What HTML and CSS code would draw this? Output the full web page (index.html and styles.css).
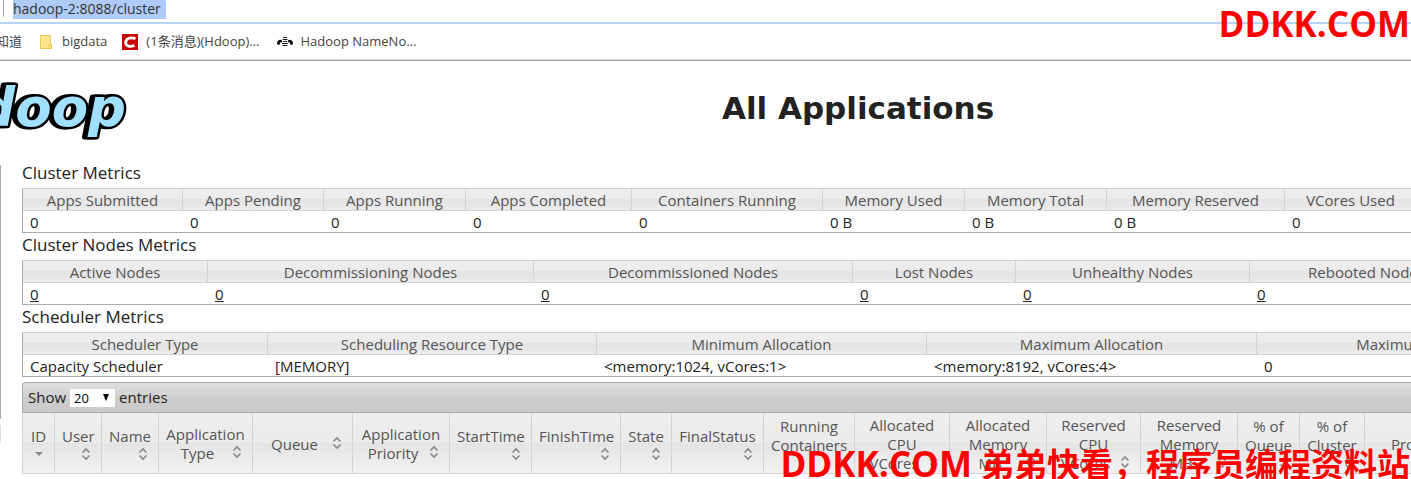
FILE: index.html
```html
<!DOCTYPE html>
<html lang="zh-CN">
<head>
<meta charset="utf-8">
<title>All Applications</title>
<link rel="stylesheet" href="styles.css">
</head>
<body>
<svg class="defs" aria-hidden="true">
  <symbol id="both" viewBox="0 0 16 16"><path d="M4.500 6.500 8 3l3.500 3.500M4.500 9.500 8 13l3.500-3.500" fill="none" stroke="#888" stroke-width="1.600"/></symbol>
  <symbol id="down" viewBox="0 0 16 16"><path d="M4 6h8L8 10z" fill="#888"/></symbol>
</svg>

<div class="address-bar">
  <span class="divider"></span>
  <input class="address" aria-label="Address" value="hadoop-2:8088/cluster">
</div>
<nav class="bookmarks">
  <a href="#" class="bm bm-zhidao">知道</a>
  <a href="#" class="bm bm-bigdata"><svg width="16" height="16" viewBox="0 0 16 16"><path d="M2.500 1.500h10v9h1v4h-11z" fill="#ffe48f" stroke="#e8c850"/><path d="M10.500 14.500v-3h3" fill="none" stroke="#e8c850"/></svg>bigdata</a>
  <a href="#" class="bm bm-csdn"><svg width="16" height="16" viewBox="0 0 16 16"><path d="M0 0h16v16H0z" fill="#c90000"/><path d="M13.500 4.600C10 3.300 4.500 3.400 3.700 8c-.5 4.700 4.500 5 8.800 3.500" fill="none" stroke="#fff" stroke-width="2.800"/></svg>(1条消息)(Hdoop)...</a>
  <a href="#" class="bm"><svg width="16" height="16" viewBox="0 0 16 16"><path d="M0 8.500C1 5.500 3 5 5.200 6.500L5 8.300l-1.800.2L2.500 11 .3 10.500zM16 8.500C15 5.500 13 5 10.800 6.500l.2 1.800 1.800.2.700 2.500 2.200-.5z" fill="#111"/><path d="M6 3.500h4M5.500 5.500h5M6 7.500h4M5 9.500h6M5.500 11.500h5" stroke="#222" stroke-width="1.200"/></svg>Hadoop NameNo...</a>
</nav>

<header class="header">
  <svg class="logo" width="135" height="70" role="img" aria-label="hadoop">
    <text class="logo-shadow" x="123" y="55" text-anchor="end">hadoop</text>
    <text class="logo-face" x="126" y="55" text-anchor="end">hadoop</text>
  </svg>
  <h1>All Applications</h1>
</header>

<div class="page">
  <aside class="side"><div class="side-main"></div><div class="side-next"></div></aside>
  <main class="content">
    <h2>Cluster Metrics</h2>
    <table class="metrics">
      <colgroup><col class="w160"><col class="w141"><col class="w142"><col class="w166"><col class="w191"><col class="w142"><col class="w142"><col class="w178"><col class="w132"></colgroup>
      <thead><tr><th>Apps Submitted</th><th>Apps Pending</th><th>Apps Running</th><th>Apps Completed</th><th>Containers Running</th><th>Memory Used</th><th>Memory Total</th><th>Memory Reserved</th><th>VCores Used</th></tr></thead>
      <tbody><tr><td>0</td><td>0</td><td>0</td><td>0</td><td>0</td><td>0 B</td><td>0 B</td><td>0 B</td><td>0</td></tr></tbody>
    </table>
    <h2>Cluster Nodes Metrics</h2>
    <table class="metrics">
      <colgroup><col class="w185"><col class="w326"><col class="w319"><col class="w163"><col class="w234"><col class="w234"></colgroup>
      <thead><tr><th>Active Nodes</th><th>Decommissioning Nodes</th><th>Decommissioned Nodes</th><th>Lost Nodes</th><th>Unhealthy Nodes</th><th>Rebooted Nodes</th></tr></thead>
      <tbody><tr><td><a href="#">0</a></td><td><a href="#">0</a></td><td><a href="#">0</a></td><td><a href="#">0</a></td><td><a href="#">0</a></td><td><a href="#">0</a></td></tr></tbody>
    </table>
    <h2>Scheduler Metrics</h2>
    <table class="metrics">
      <colgroup><col class="w245"><col class="w329"><col class="w330"><col class="w330"><col class="w460"></colgroup>
      <thead><tr><th>Scheduler Type</th><th>Scheduling Resource Type</th><th>Minimum Allocation</th><th>Maximum Allocation</th><th>Maximum Cluster Application Priority</th></tr></thead>
      <tbody><tr><td>Capacity Scheduler</td><td>[MEMORY]</td><td>&lt;memory:1024, vCores:1&gt;</td><td>&lt;memory:8192, vCores:4&gt;</td><td>0</td></tr></tbody>
    </table>

    <div class="toolbar">
      <label for="length">Show</label>
      <span class="select"><select id="length"><option>20</option><option>40</option></select><svg width="6" height="7" viewBox="0 0 6 7"><path d="M0 0h6L3 7z"/></svg></span>
      <span>entries</span>
    </div>
    <table class="apps">
      <colgroup><col class="w32"><col class="w47"><col class="w57"><col class="w94"><col class="w100"><col class="w97"><col class="w82"><col class="w89"><col class="w51"><col class="w92"><col class="w91"><col class="w95"><col class="w97"><col class="w94"><col class="w97"><col class="w62"><col class="w65"><col class="w130"></colgroup>
      <thead><tr>
        <th>ID<div class="sort"><svg><use href="#down"/></svg></div></th>
        <th>User<div class="sort"><svg><use href="#both"/></svg></div></th>
        <th>Name<div class="sort"><svg><use href="#both"/></svg></div></th>
        <th>Application<div class="sort"><span>Type</span><svg><use href="#both"/></svg></div></th>
        <th><div class="sort"><span>Queue</span><svg><use href="#both"/></svg></div></th>
        <th>Application<div class="sort"><span>Priority</span><svg><use href="#both"/></svg></div></th>
        <th>StartTime<div class="sort"><svg><use href="#both"/></svg></div></th>
        <th>FinishTime<div class="sort"><svg><use href="#both"/></svg></div></th>
        <th>State<div class="sort"><svg><use href="#both"/></svg></div></th>
        <th>FinalStatus<div class="sort"><svg><use href="#both"/></svg></div></th>
        <th>Running<br>Containers<div class="sort"><svg><use href="#both"/></svg></div></th>
        <th>Allocated<br>CPU<div class="sort"><span>VCores</span><svg><use href="#both"/></svg></div></th>
        <th>Allocated<br>Memory<div class="sort"><span>MB</span><svg><use href="#both"/></svg></div></th>
        <th>Reserved<br>CPU<div class="sort"><span>VCores</span><svg><use href="#both"/></svg></div></th>
        <th>Reserved<br>Memory<div class="sort"><span>MB</span><svg><use href="#both"/></svg></div></th>
        <th>% of<br>Queue<div class="sort"><svg><use href="#both"/></svg></div></th>
        <th>% of<br>Cluster<div class="sort"><svg><use href="#both"/></svg></div></th>
        <th><div class="sort"><span>Progress</span><svg><use href="#both"/></svg></div></th>
      </tr></thead>
    </table>
  </main>
</div>
<div class="mark mark-top">DDKK.COM</div>
<div class="mark mark-bottom">DDKK.COM <span>弟弟快看，程序员编程资料站</span></div>
</body>
</html>
```
FILE: styles.css
```css
* { box-sizing: border-box; }
html { overflow: hidden; }
body {
  margin: 0;
  background: #fff;
  color: #222;
  font: 15px/19px "Open Sans", "Noto Sans CJK SC", sans-serif;
  overflow: hidden;
}
.defs { position: absolute; width: 0; height: 0; }

.address-bar {
  display: flex;
  height: 24px;
  border-bottom: 2px solid #b5d5f7;
}
.divider { width: 1px; height: 17px; margin: 0 9px 0 3px; background: #aaa; }
.address {
  width: 153px;
  height: 19px;
  padding: 0 0 2px;
  border: 0;
  background: #aecbfa;
  color: #333;
  font: 14px/17px "Open Sans", sans-serif;
}
.bookmarks {
  display: flex;
  align-items: center;
  height: 37px;
  padding-bottom: 1px;
  border-bottom: 1px solid #a0a0a0;
  box-shadow: inset 0 -1px #d8d8d8;
}
.bm {
  display: flex;
  align-items: center;
  gap: 8px;
  margin-right: 22px;
  color: #444;
  font-size: 13px;
  text-decoration: none;
  white-space: nowrap;
}
.bm-zhidao { margin: 0 16px 0 -4px; }
.bm-bigdata { margin-right: 15px; }
.bm-csdn { margin-right: 17px; }

.header { position: relative; height: 100px; padding: 27px 0 0 305px; }
.logo { position: absolute; left: 0; top: 10px; }
.logo text { font: italic bold 53px "DejaVu Sans", sans-serif; paint-order: stroke; stroke: #000; stroke-linejoin: round; }
.logo-shadow { fill: #000; stroke-width: 5px; }
.logo-face { fill: #a1dfff; stroke-width: 5px; }
h1 {
  margin: 0;
  font: bold 31px/40px "DejaVu Sans", sans-serif;
  text-align: center;
}

.page { display: flex; }
.side { flex: 0 0 22px; padding-top: 4px; }
.side-main { width: 1px; height: 254px; background: #aaa; }
.side-next { width: 1px; height: 18px; margin-top: 6px; background: #ddd; }
.content { flex: 1; min-width: 0; }
h2 { margin: 0; font-size: 17px; line-height: 23px; font-weight: 400; padding-bottom: 4px; }

table { width: 100%; table-layout: fixed; border-collapse: separate; border-spacing: 0; }
th { color: #555; font-weight: 400; white-space: nowrap; }
.metrics { border-left: 1px solid #aaa; border-bottom: 1px solid #aaa; }
.metrics th {
  height: 23px;
  padding: 2px 0 0;
  border: solid #d3d3d3;
  border-width: 1px 1px 1px 0;
  background: linear-gradient(#eee, #ebebeb 50%, #e4e4e4 50%, #ebebeb);
}
.metrics td { height: 21px; padding: 2px 7px 0; white-space: nowrap; }
a { color: inherit; }

.toolbar {
  display: flex;
  align-items: center;
  gap: 4px;
  height: 31px;
  margin-top: 5px;
  padding: 0 5px;
  border: 1px solid #aaa;
  border-right: 0;
  border-radius: 4px 0 0 0;
  background: linear-gradient(#e0e0e0, #cccccc 60%, #cacaca);
}
.select { position: relative; display: flex; }
.select svg { position: absolute; right: 6px; top: 5px; pointer-events: none; }
select {
  appearance: none;
  width: 45px;
  height: 18px;
  padding: 0 4px;
  border: 0;
  border-radius: 0;
  background: #fff;
  color: #000;
  font: 13px/18px "Open Sans", sans-serif;
}
.apps { border-left: 1px solid #d3d3d3; }
.apps th {
  height: 61px;
  padding: 2px 7px 0;
  border: solid #d3d3d3;
  border-width: 0 1px 1px 0;
  background: linear-gradient(#eee, #ebebeb 50%, #e4e4e4 50%, #f2f2f2);
}
.sort { display: flex; justify-content: flex-end; }
.sort span { flex: 1; }
.sort svg { flex: none; width: 16px; height: 16px; }

.w32 { width: 32px; }
.w47 { width: 47px; }
.w51 { width: 51px; }
.w57 { width: 57px; }
.w62 { width: 62px; }
.w65 { width: 65px; }
.w82 { width: 82px; }
.w89 { width: 89px; }
.w91 { width: 91px; }
.w92 { width: 92px; }
.w94 { width: 94px; }
.w95 { width: 95px; }
.w97 { width: 97px; }
.w100 { width: 100px; }
.w130 { width: 130px; }
.w132 { width: 132px; }
.w141 { width: 141px; }
.w142 { width: 142px; }
.w160 { width: 160px; }
.w163 { width: 163px; }
.w166 { width: 166px; }
.w178 { width: 178px; }
.w185 { width: 185px; }
.w191 { width: 191px; }
.w234 { width: 234px; }
.w245 { width: 245px; }
.w319 { width: 319px; }
.w326 { width: 326px; }
.w329 { width: 329px; }
.w330 { width: 330px; }
.w460 { width: 460px; }

.mark {
  position: absolute;
  right: 1px;
  color: #f00;
  font: bold 35px/48px "Open Sans", sans-serif;
  white-space: nowrap;
}
.mark-top { top: 0; }
.mark-bottom { top: 439px; height: 40px; overflow: hidden; }
.mark-bottom span { font: bold 33px/48px "Noto Sans CJK SC", sans-serif; }
```
